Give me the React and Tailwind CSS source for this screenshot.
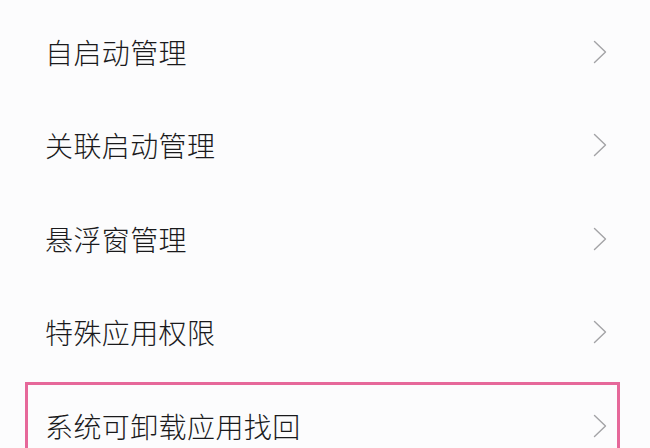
import React from "react";

const items = ["自启动管理", "关联启动管理", "悬浮窗管理", "特殊应用权限", "系统可卸载应用找回"];

const Chevron = () => (
  <svg width="14" height="24" viewBox="0 0 14 24" fill="none">
    <path d="M1.5 1.5 L12.5 12 L1.5 22.5" stroke="#a3a3a6" strokeWidth="1.4" strokeLinecap="round" strokeLinejoin="round" />
  </svg>
);

export default function App() {
  return (
    <div
      className="relative w-[650px] h-[448px] overflow-hidden bg-[#fcfcfd] pt-[5px]"
      style={{ fontFamily: '"Noto Sans CJK SC", "Noto Sans", sans-serif' }}
    >
      {items.map((t) => (
        <div key={t} className="flex items-center justify-between h-[93.5px] pl-[45px] pr-[43px]">
          <span className="text-[28px] font-light tracking-[0.4px] text-[#1a1a1c]">{t}</span>
          <Chevron />
        </div>
      ))}
      {/* 标注框 */}
      <div className="absolute left-[25px] top-[382px] w-[595px] h-[90px] border-[3px] border-[#e6689a]" />
    </div>
  );
}
